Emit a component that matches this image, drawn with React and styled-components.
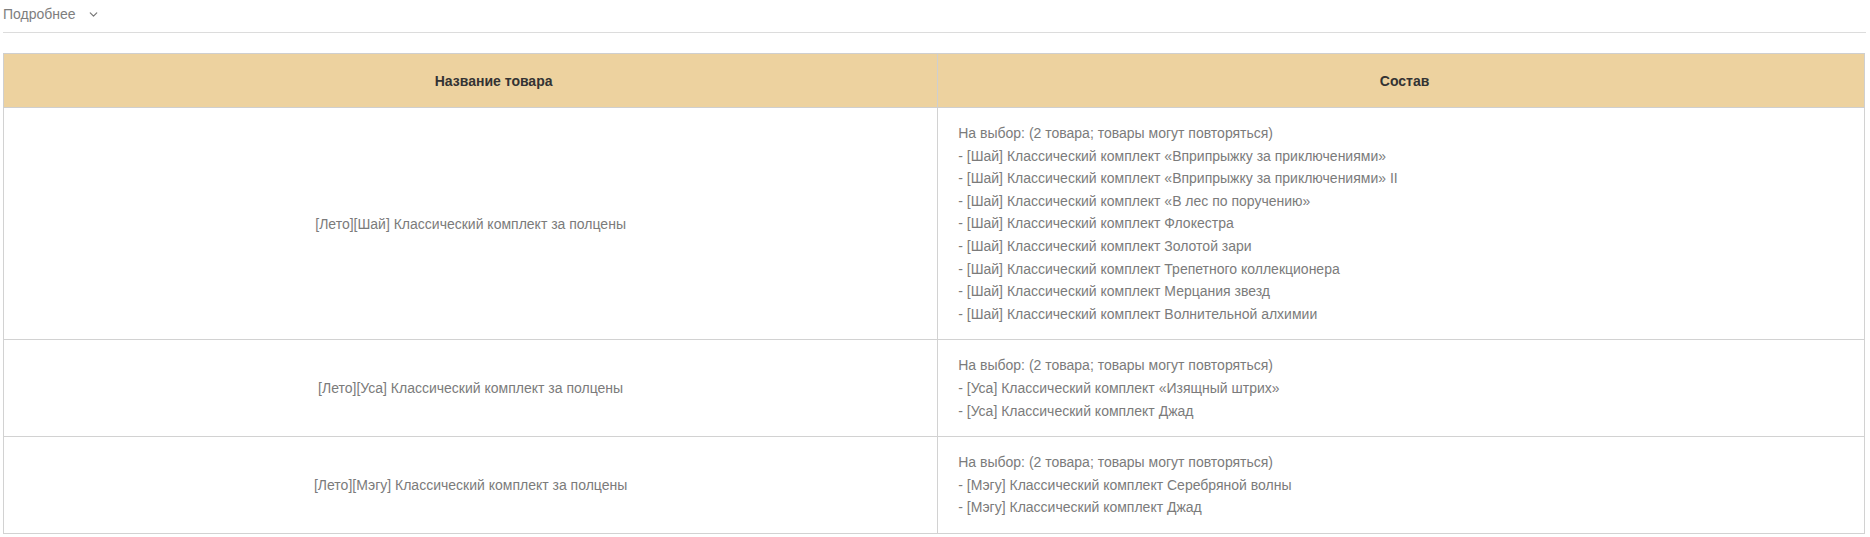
import styled, { createGlobalStyle } from 'styled-components';
import { ChevronDown } from 'lucide-react';

const GlobalStyle = createGlobalStyle`
  body {
    margin: 0;
    background: #ffffff;
    font-family: 'Liberation Sans', Arial, sans-serif;
  }
`;

const products = [
  {
    id: 1,
    name: '[Лето][Шай] Классический комплект за полцены',
    items: [
      'На выбор: (2 товара; товары могут повторяться)',
      '- [Шай] Классический комплект «Вприпрыжку за приключениями»',
      '- [Шай] Классический комплект «Вприпрыжку за приключениями» II',
      '- [Шай] Классический комплект «В лес по поручению»',
      '- [Шай] Классический комплект Флокестра',
      '- [Шай] Классический комплект Золотой зари',
      '- [Шай] Классический комплект Трепетного коллекционера',
      '- [Шай] Классический комплект Мерцания звезд',
      '- [Шай] Классический комплект Волнительной алхимии',
    ],
  },
  {
    id: 2,
    name: '[Лето][Уса] Классический комплект за полцены',
    items: [
      'На выбор: (2 товара; товары могут повторяться)',
      '- [Уса] Классический комплект «Изящный штрих»',
      '- [Уса] Классический комплект Джад',
    ],
  },
  {
    id: 3,
    name: '[Лето][Мэгу] Классический комплект за полцены',
    items: [
      'На выбор: (2 товара; товары могут повторяться)',
      '- [Мэгу] Классический комплект Серебряной волны',
      '- [Мэгу] Классический комплект Джад',
    ],
  },
];

const App = () => {
  return (
    <Page>
      <GlobalStyle />
      <Toggle>
        <ToggleText>Подробнее</ToggleText>
        <ChevronDown size={13} strokeWidth={2.2} color="#777" />
      </Toggle>

      <Table>
        <colgroup>
          <col style={{ width: '50.2%' }} />
          <col />
        </colgroup>
        <thead>
          <tr>
            <HeadCell $shift={46}>Название товара</HeadCell>
            <HeadCell $shift={7}>Состав</HeadCell>
          </tr>
        </thead>
        <tbody>
          {products.map((product) => (
            <tr key={product.id}>
              <NameCell>{product.name}</NameCell>
              <ContentCell>
                {product.items.map((item, i) => (
                  <Line key={i}>{item}</Line>
                ))}
              </ContentCell>
            </tr>
          ))}
        </tbody>
      </Table>
    </Page>
  );
};

export default App;

const Page = styled.div`
  width: 1863px;
  padding: 0 3px;
  color: #7b7b7b;
  font-size: 14px;
`;

const Toggle = styled.div`
  display: flex;
  align-items: center;
  gap: 11px;
  height: 33px;
  border-bottom: 1px solid #dcdcdc;
  padding-bottom: 4px;
  box-sizing: border-box;

  svg {
    margin-top: 1px;
  }
`;

const ToggleText = styled.span`
  font-size: 14px;
  color: #7e7e7e;
`;

const Table = styled.table`
  width: 1862px;
  margin-top: 20px;
  border-collapse: collapse;
  table-layout: fixed;
`;

const HeadCell = styled.th`
  height: 54px;
  box-sizing: border-box;
  background-color: #edd29f;
  border: 1px solid #cfcfcf;
  color: #333333;
  font-size: 14px;
  font-weight: bold;
  text-align: center;
  vertical-align: middle;
  padding: 0 0 0 ${(p) => p.$shift}px;
`;

const NameCell = styled.td`
  border: 1px solid #d2d2d2;
  text-align: center;
  vertical-align: middle;
  font-size: 14px;
  color: #7b7b7b;
  padding: 0 12px;
`;

const ContentCell = styled.td`
  border: 1px solid #d2d2d2;
  vertical-align: middle;
  padding: 14px 20px;
  font-size: 14px;
  line-height: 22.6px;
  color: #7b7b7b;
`;

const Line = styled.div``;
